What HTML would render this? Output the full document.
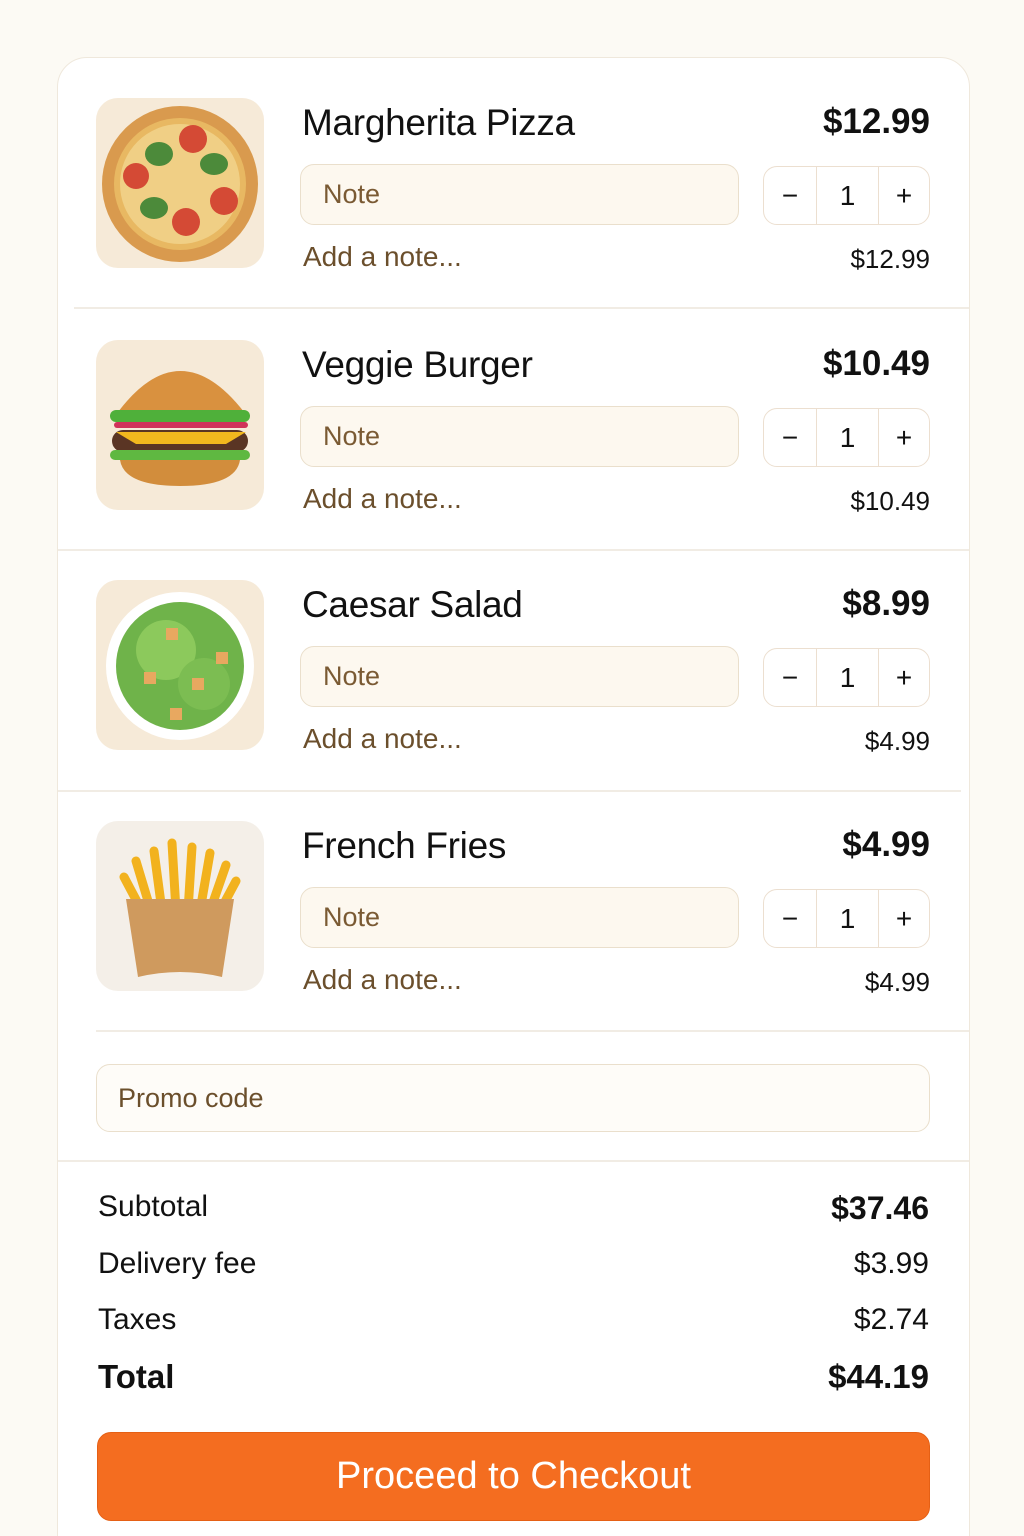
<!DOCTYPE html>
<html><head><meta charset="utf-8"><style>
*{box-sizing:border-box;margin:0;padding:0}
html,body{width:1024px;height:1536px;overflow:hidden}
body{background:#fcfaf4;font-family:"Liberation Sans",sans-serif;color:#111}
.wrap{position:absolute;left:0;top:0;width:1024px;height:1536px;overflow:hidden}
.card{position:absolute;left:57px;top:57px;width:913px;height:1520px;background:#fff;border:1.5px solid #efe8dc;border-radius:30px}
.row{position:absolute;left:0;width:100%;height:241px}
.sep{position:absolute;height:1.5px;background:#f1ece4}
.img{position:absolute;left:38px;top:40px;width:168px;height:170px;border-radius:22px;background:#f6ead8;overflow:hidden}
.title{position:absolute;left:244px;top:44px;font-size:37px;letter-spacing:-0.3px}
.price{position:absolute;right:39px;top:44px;font-size:35px;font-weight:700}
.note{position:absolute;left:242px;top:106px;width:439px;height:61px;border:1.5px solid #eadfcc;border-radius:14px;background:#fdf8ef;font-size:27px;color:#7a5a33;padding:14px 22px}
.add{position:absolute;left:245px;top:183px;font-size:28px;color:#6b4f2c}
.qty{position:absolute;left:705px;top:108px;width:167px;height:59px;border:1.5px solid #ecdfd0;border-radius:14px;display:flex;font-size:28px}
.qty div{display:flex;align-items:center;justify-content:center}
.sub{position:absolute;right:39px;top:186px;font-size:26px}
.promo{position:absolute;left:38px;top:1006px;width:834px;height:68px;border:1.5px solid #eadfcc;border-radius:14px;background:#fefcf8;font-size:27px;color:#6b4f2c;padding:18px 21px}
.l{position:absolute;left:40px;font-size:30px}
.r{position:absolute;right:40px;font-size:30px}
.btn{position:absolute;left:39px;top:1374px;width:833px;height:89px;background:#f46d20;border:1.5px solid #e56015;border-radius:14px;color:#fff;font-size:38px;text-align:center;line-height:87px}
</style></head><body><div class="wrap">
<div class="card">
<div class="row" style="top:0">
<div class="img"><svg width="168" height="170"><circle cx="84" cy="86" r="78" fill="#d99a4e"/><circle cx="84" cy="86" r="66" fill="#e8b862"/><circle cx="84" cy="86" r="60" fill="#f0cf85"/>
<circle cx="97" cy="41" r="14" fill="#d44a35"/><circle cx="40" cy="78" r="13" fill="#d44a35"/><circle cx="128" cy="103" r="14" fill="#d44a35"/><circle cx="90" cy="124" r="14" fill="#d44a35"/>
<ellipse cx="63" cy="56" rx="14" ry="12" fill="#4c8a3a"/><ellipse cx="118" cy="66" rx="14" ry="11" fill="#4c8a3a"/><ellipse cx="58" cy="110" rx="14" ry="11" fill="#4c8a3a"/></svg></div>
<div class="title">Margherita Pizza</div><div class="price">$12.99</div>
<div class="note">Note</div><div class="add">Add a note...</div>
<div class="qty"><div style="width:53px;border-right:1.5px solid #ecdfd0">−</div><div style="width:62px;border-right:1.5px solid #ecdfd0">1</div><div style="flex:1">+</div></div>
<div class="sub">$12.99</div>
</div>
<div class="sep" style="left:16px;right:0;top:249px"></div>
<div class="row" style="top:242px">
<div class="img"><svg width="168" height="170"><path d="M22 72 Q84 -10 148 72 Z" fill="#d9913f"/><rect x="14" y="70" width="140" height="12" rx="6" fill="#4fb03a"/><rect x="18" y="82" width="134" height="6" rx="3" fill="#d0335a"/><rect x="16" y="90" width="136" height="22" rx="11" fill="#5a3524"/><path d="M20 92 L150 92 L130 104 L40 104 Z" fill="#f2b81e"/><rect x="14" y="110" width="140" height="10" rx="5" fill="#5fb841"/><path d="M24 120 L144 120 Q140 146 84 146 Q28 146 24 120 Z" fill="#d28d3c"/></svg></div>
<div class="title">Veggie Burger</div><div class="price">$10.49</div>
<div class="note">Note</div><div class="add">Add a note...</div>
<div class="qty"><div style="width:53px;border-right:1.5px solid #ecdfd0">−</div><div style="width:62px;border-right:1.5px solid #ecdfd0">1</div><div style="flex:1">+</div></div>
<div class="sub">$10.49</div>
</div>
<div class="sep" style="left:0;right:0;top:491px"></div>
<div class="row" style="top:482px">
<div class="img"><svg width="168" height="170"><circle cx="84" cy="86" r="74" fill="#fff"/><circle cx="84" cy="86" r="64" fill="#6fb34a"/><circle cx="70" cy="70" r="30" fill="#8cc95c"/><circle cx="108" cy="104" r="26" fill="#7cbd52"/><rect x="70" y="48" width="12" height="12" fill="#e8a860"/><rect x="120" y="72" width="12" height="12" fill="#e8a860"/><rect x="48" y="92" width="12" height="12" fill="#e8a860"/><rect x="96" y="98" width="12" height="12" fill="#e8a860"/><rect x="74" y="128" width="12" height="12" fill="#e8a860"/></svg></div>
<div class="title">Caesar Salad</div><div class="price">$8.99</div>
<div class="note">Note</div><div class="add">Add a note...</div>
<div class="qty"><div style="width:53px;border-right:1.5px solid #ecdfd0">−</div><div style="width:62px;border-right:1.5px solid #ecdfd0">1</div><div style="flex:1">+</div></div>
<div class="sub">$4.99</div>
</div>
<div class="sep" style="left:0;right:8px;top:732px"></div>
<div class="row" style="top:723px">
<div class="img" style="background:#f4efe8"><svg width="168" height="170"><g stroke="#f2b21e" stroke-width="9" stroke-linecap="round"><line x1="40" y1="40" x2="55" y2="90"/><line x1="58" y1="30" x2="66" y2="90"/><line x1="76" y1="22" x2="80" y2="90"/><line x1="96" y1="26" x2="92" y2="90"/><line x1="114" y1="32" x2="104" y2="90"/><line x1="130" y1="44" x2="114" y2="90"/><line x1="28" y1="56" x2="46" y2="90"/><line x1="140" y1="60" x2="124" y2="90"/></g><path d="M30 78 L138 78 L126 156 Q84 146 42 156 Z" fill="#cf9a5e"/></svg></div>
<div class="title">French Fries</div><div class="price">$4.99</div>
<div class="note">Note</div><div class="add">Add a note...</div>
<div class="qty"><div style="width:53px;border-right:1.5px solid #ecdfd0">−</div><div style="width:62px;border-right:1.5px solid #ecdfd0">1</div><div style="flex:1">+</div></div>
<div class="sub">$4.99</div>
</div>
<div class="sep" style="left:38px;right:0;top:972px"></div>
<div class="promo">Promo code</div>
<div class="sep" style="left:0;right:0;top:1102px"></div>
<div class="l" style="top:1132px">Subtotal</div><div class="r" style="top:1132px;font-weight:700;font-size:32px">$37.46</div>
<div class="l" style="top:1189px">Delivery fee</div><div class="r" style="top:1189px">$3.99</div>
<div class="l" style="top:1245px">Taxes</div><div class="r" style="top:1245px">$2.74</div>
<div class="l" style="top:1300px;font-weight:700;font-size:33px">Total</div><div class="r" style="top:1300px;font-weight:700;font-size:33px">$44.19</div>
<div class="btn">Proceed to Checkout</div>
</div>
</div></body></html>
